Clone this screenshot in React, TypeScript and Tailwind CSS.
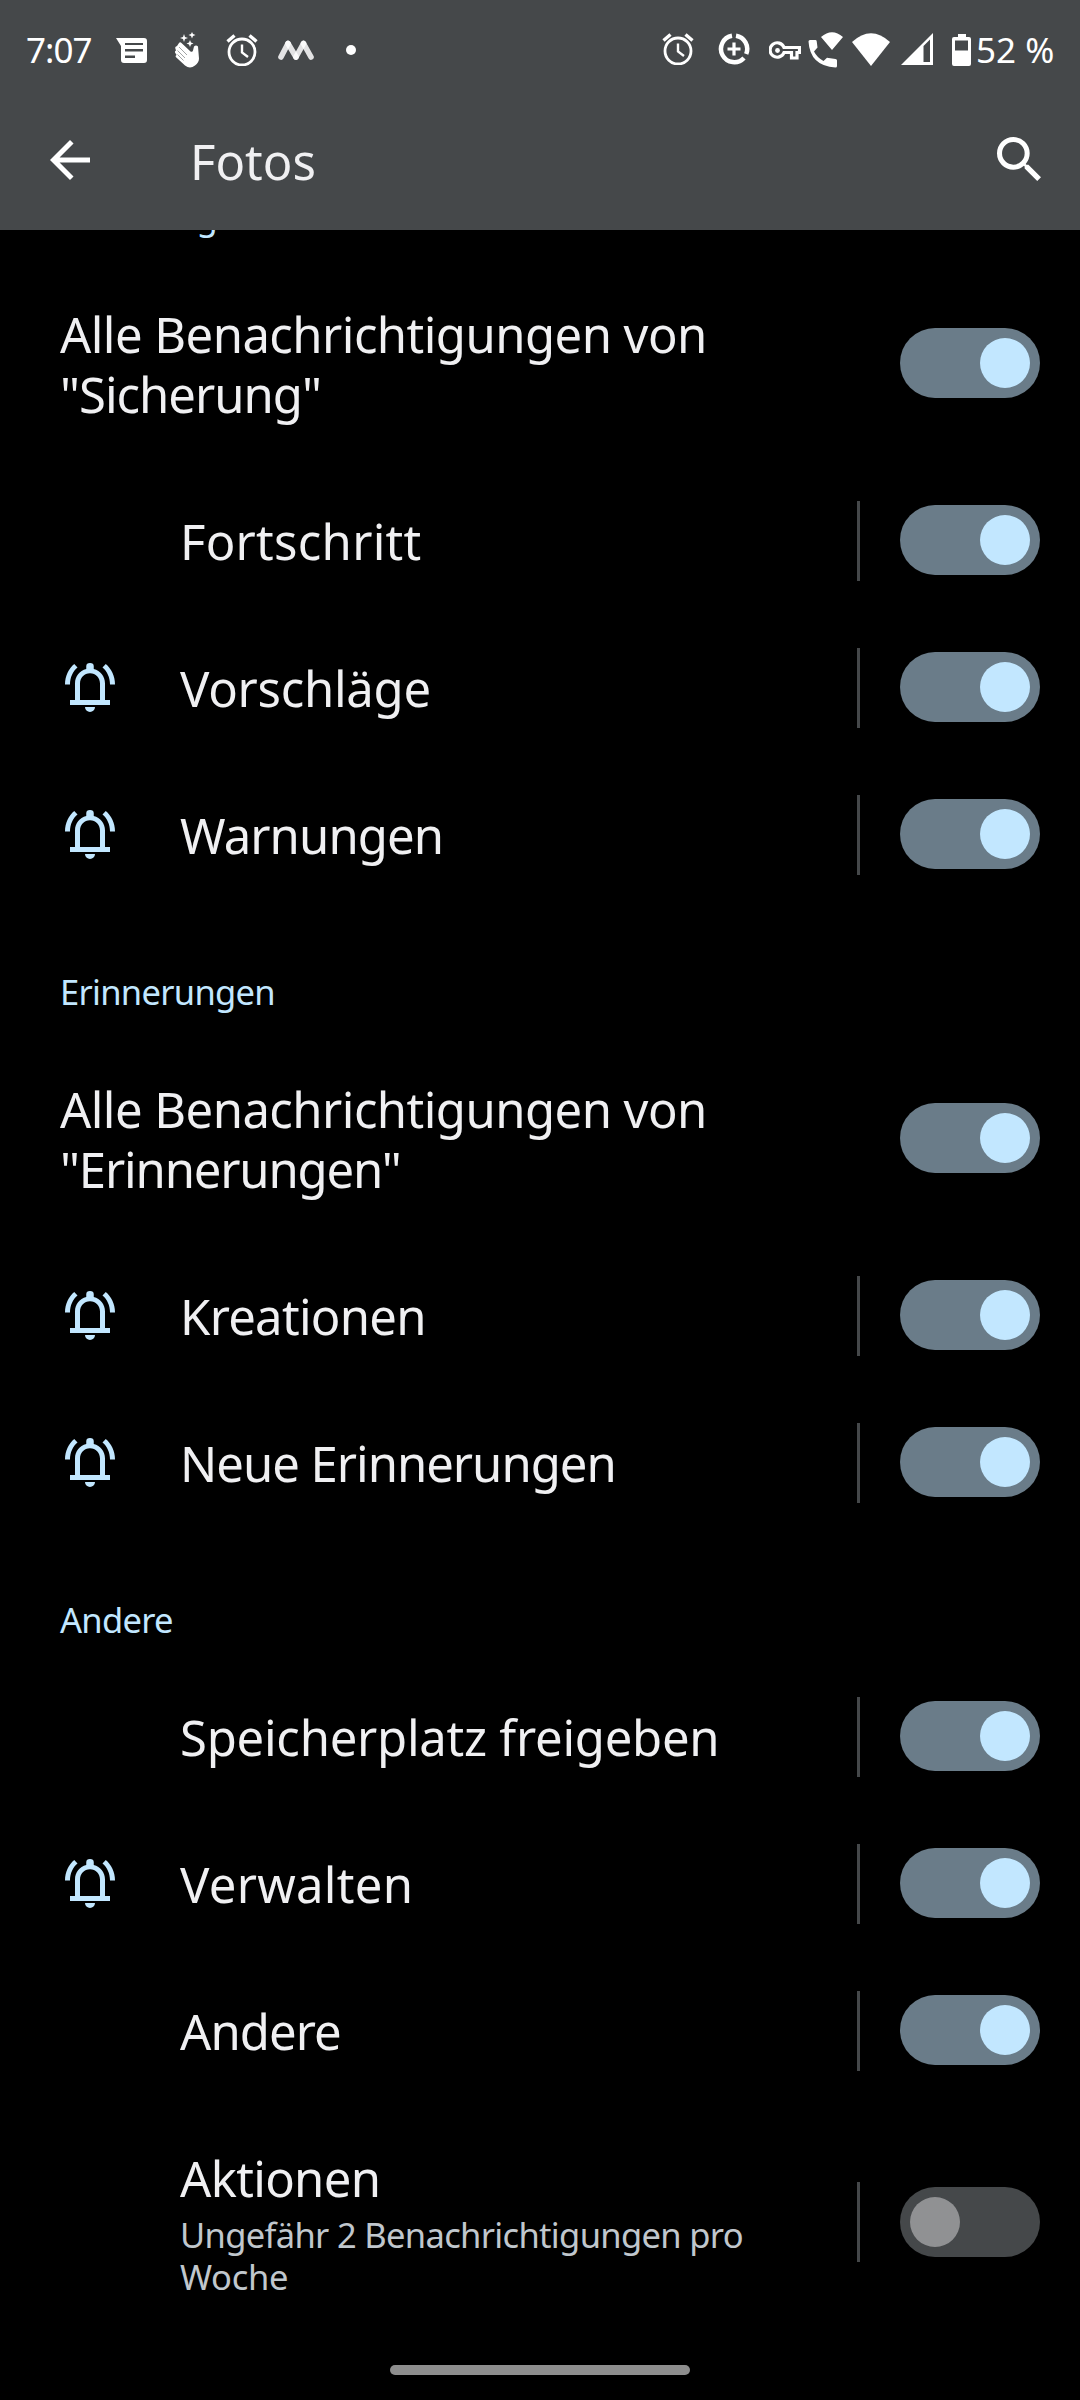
import React, { useState } from "react";

type Item = { label: string; track: string; bell?: boolean; on?: boolean; note?: boolean };

function Switch({ initial }: { initial: boolean }) {
  const [on, setOn] = useState(initial);
  return (
    <button
      role="switch"
      aria-checked={on}
      onClick={() => setOn(!on)}
      className={`flex h-[70px] w-[140px] shrink-0 items-center rounded-full px-[10px] ${on ? "justify-end bg-[#6a7c89]" : "justify-start bg-[#45484a]"}`}
    >
      <span className={`size-[50px] rounded-full ${on ? "bg-[#c2e7ff]" : "bg-[#909193]"}`} />
    </button>
  );
}

function Bell() {
  return (
    <svg viewBox="0 0 24 24" className="size-[60px] text-[#c2e7ff]" fill="currentColor">
      <path d="M18 17.200V10.600c0-2.900-1.800-5.100-4.500-5.800V3.700a1.500 1.300 0 0 0-3 0v1.100C7.800 5.500 6 7.700 6 10.600v6.600H4v2h16v-2zm-2 0H8v-6.600c0-2.300 1.700-4.100 4-4.100s4 1.800 4 4.100z" />
      <path d="M10 20a2 2 0 0 0 4 0zM7 4.200 5.700 2.800C3.500 4.600 2 7.600 2 11h2c0-2.800 1.100-5.200 3-6.800zM17 4.200l1.300-1.400C20.500 4.600 22 7.600 22 11h-2c0-2.800-1.100-5.200-3-6.800z" />
    </svg>
  );
}

function Row({ label, track, bell, on = true, note }: Item) {
  return (
    <div className={`flex shrink-0 items-center pr-10 pb-px pl-[60px] ${note ? "h-[237px]" : "h-[147px]"}`}>
      <div className="w-[120px]">{bell && <Bell />}</div>
      <div className="flex-1 pt-[2px]">
        <div className={`text-[49px] leading-[60px] whitespace-nowrap text-[#f0f0f2] ${track}`}>{label}</div>
        {note && (
          <div className="mt-[6px] text-[34.500px] leading-[42px] whitespace-nowrap text-[#c0c7cd]">
            <div className="tracking-[-0.670px]">Ungefähr 2 Benachrichtigungen pro</div>
            <div className="tracking-[-0.300px]">Woche</div>
          </div>
        )}
      </div>
      <div className={`mr-10 h-20 w-[3px] bg-[#45484a] ${note ? "" : "mt-[2px]"}`} />
      <Switch initial={on} />
    </div>
  );
}

function GroupRow({ name, track }: { name: string; track: string }) {
  return (
    <div className="flex h-[207px] shrink-0 items-center justify-between pr-10 pb-px pl-[60px]">
      <div className="pt-[2px] text-[49px] leading-[60px] whitespace-nowrap text-[#f0f0f2]">
        <div className="tracking-[-0.540px]">Alle Benachrichtigungen von</div>
        <div className={track}>"{name}"</div>
      </div>
      <Switch initial={true} />
    </div>
  );
}

function Header({ children }: { children: string }) {
  return (
    <div className="flex h-[127px] shrink-0 items-center pt-[41px] pl-[60px] text-[34.500px] leading-[42px] tracking-[-0.700px] text-[#c2e7ff]">
      <span>{children}</span>
    </div>
  );
}

function Alarm({ className }: { className: string }) {
  return (
    <svg viewBox="0 0 32 32" className={className} fill="none" stroke="currentColor">
      <circle cx="16" cy="18" r="13" strokeWidth="2.800" />
      <path d="M1.500 7.500 8.500 1.500M30.500 7.500 23.500 1.500" strokeWidth="3.400" />
      <path d="M16 10.500v8l6 4.500" strokeWidth="2.400" />
    </svg>
  );
}

function StatusBar() {
  return (
    <div className="flex h-[100px] items-center text-white">
      <span className="ml-[26px] w-[90px] text-[35px] leading-[42px] whitespace-nowrap tracking-[-1px]">7:07</span>
      <svg viewBox="0 0 31 25" className="h-[25px] w-[31px]" fill="currentColor">
        <path fillRule="evenodd" d="M0 0h28q3 0 3 3v19q0 3-3 3H8q-3 0-3-3V8zM9 5v2h18V5zM9 11v2.500h18V11zM9 17.500v2.500h10v-2.500z" />
      </svg>
      <svg viewBox="0 0 24 36" className="ml-7 h-9 w-6" fill="currentColor">
        <path d="M9 2l1 3 3 1-3 1-1 3-1-3-3-1 3-1zM17 0l1 2 2.500 1-2.500 1-1 2.500-1-2.500L13.500 3 16 2zM15 8l1 2.500 2.500 1-2.500 1-1 2.500-1-2.500-2.500-1 2.500-1z" />
        <path d="M4 11q1-1.500 2.500 0l9 8.500q2 1 2.500-1l1-4q2-2 4 0l1 12q0 4-4 7-5 4-10 0L.8 25q-.6-1.300.8-2L0 20.500q-.3-1.500 1-2L.2 16Q0 14.500 2 14z" />
        <path d="m4 15 8 8M2.500 18.500l7.500 7.500M2.500 22.500l6 6" stroke="#45484a" strokeWidth=".5" />
      </svg>
      <Alarm className="ml-[27px] size-8" />
      <svg viewBox="0 0 36 20" className="ml-[20px] h-5 w-9" fill="none" stroke="#fff" strokeWidth="5.600" strokeLinecap="round">
        <path d="m3 17 7-13.500" opacity=".85" />
        <path d="m10 3.500 8 13.500" opacity=".85" />
        <path d="m18 17 7.500-13.500" opacity=".85" />
        <path d="m25.500 3.500 7.500 13.500" opacity=".85" />
      </svg>
      <span className="ml-8 size-[10px] rounded-full bg-white" />
      <div className="mr-[26px] ml-auto flex items-center">
        <Alarm className="mb-[2px] size-8" />
        <svg viewBox="0 0 32 32" className="mb-[2px] ml-6 size-8" fill="none" stroke="currentColor">
          <path d="M14 2.800A13.300 13.300 0 1 0 26 25M18 2.800A13.300 13.300 0 0 1 28.200 21" strokeWidth="4.500" />
          <path d="M16 9.500v13M9.500 16h13" strokeWidth="3.200" />
        </svg>
        <svg viewBox="0 0 32 19" className="ml-[19px] h-[19px] w-8" fill="none" stroke="currentColor" strokeWidth="3.200">
          <path d="M15 6.500h15.500v5H28V17h-5.500v-5.500H15A7.200 7.200 0 1 1 15 6.500z" />
          <circle cx="8.500" cy="9.500" r="2.400" fill="currentColor" stroke="none" />
        </svg>
        <svg viewBox="0 0 35 36" className="ml-[7px] h-9 w-[35px]" fill="currentColor">
          <path d="M13 5Q24-4.500 35 5L24 18zM2 8h5.500q1 0 1.200 1.200l.8 6.300-3.500 4Q9 25.500 15.500 29l3.500-3.300 8.500 1.300q1.500.2 1.500 1.500V34q0 1.500-1.500 1.500Q2 34 .5 9.500.5 8 2 8z" />
        </svg>
        <svg viewBox="0 0 38 33" className="mb-px ml-[9px] h-[33px] w-[38px]" fill="currentColor">
          <path d="M0 9Q19-8.500 38 9L19 33z" />
        </svg>
        <svg viewBox="0 0 32 32" className="mb-[2px] ml-[11px] size-8" fill="currentColor">
          <path fillRule="evenodd" d="M32 0v32H0zM22.500 13v16h6.500V6.500z" />
        </svg>
        <svg viewBox="0 0 19 32" className="ml-[19px] h-8 w-[19px]" fill="currentColor">
          <path fillRule="evenodd" d="M6 0h8v3h3q2 0 2 2v25q0 2-2 2H2q-2 0-2-2V5q0-2 2-2h4zM3 6.500v10h13v-10z" />
        </svg>
        <span className="ml-[5px] w-[78px] text-[35px] leading-[42px] whitespace-nowrap tracking-[0px]">52 %</span>
      </div>
    </div>
  );
}

export default function App() {
  return (
    <div className="relative flex h-[2400px] w-[1080px] flex-col overflow-hidden bg-black font-['Noto_Sans',sans-serif]">
      <header className="z-10 h-[230px] shrink-0 bg-[#45484a]">
        <StatusBar />
        <div className="flex h-[120px] items-center pr-[39px] pl-[50px] text-white">
          <svg viewBox="4 4 16 16" className="size-10" fill="currentColor">
            <path d="M20 11H7.830l5.590-5.590L12 4l-8 8 8 8 1.410-1.410L7.830 13H20z" />
          </svg>
          <h1 className="ml-[100px] flex-1 pt-[2px] text-[49px] leading-[60px] text-[#f0f0f2] tracking-[0px]">Fotos</h1>
          <svg viewBox="3 3 17.500 17.500" className="mb-[2px] size-11" fill="currentColor">
            <path d="M15.500 14h-.79l-.28-.27A6.471 6.471 0 0 0 16 9.500 6.500 6.500 0 1 0 9.500 16c1.610 0 3.090-.59 4.230-1.570l.27.28v.79l5 4.990L20.490 19zm-6 0a4.500 4.500 0 1 1 0-9 4.500 4.500 0 0 1 0 9z" />
          </svg>
        </div>
      </header>
      <main className="-mt-[97px] flex flex-col">
        <Header>Sicherung</Header>
        <GroupRow name="Sicherung" track="tracking-[-1px]" />
        <Row label="Fortschritt" track="tracking-[0.270px]" />
        <Row label="Vorschläge" track="tracking-[-0.270px]" bell />
        <Row label="Warnungen" track="tracking-[-0.900px]" bell />
        <Header>Erinnerungen</Header>
        <GroupRow name="Erinnerungen" track="tracking-[-1.150px]" />
        <Row label="Kreationen" track="tracking-[-0.700px]" bell />
        <Row label="Neue Erinnerungen" track="tracking-[-1px]" bell />
        <Header>Andere</Header>
        <Row label="Speicherplatz freigeben" track="tracking-[-0.240px]" />
        <Row label="Verwalten" track="tracking-[0.300px]" bell />
        <Row label="Andere" track="tracking-[-0.900px]" />
        <Row label="Aktionen" track="tracking-[-0.670px]" on={false} note />
      </main>
      <div className="absolute bottom-[25px] left-[390px] h-[10px] w-[300px] rounded-full bg-[#8e8e8e]" />
    </div>
  );
}
